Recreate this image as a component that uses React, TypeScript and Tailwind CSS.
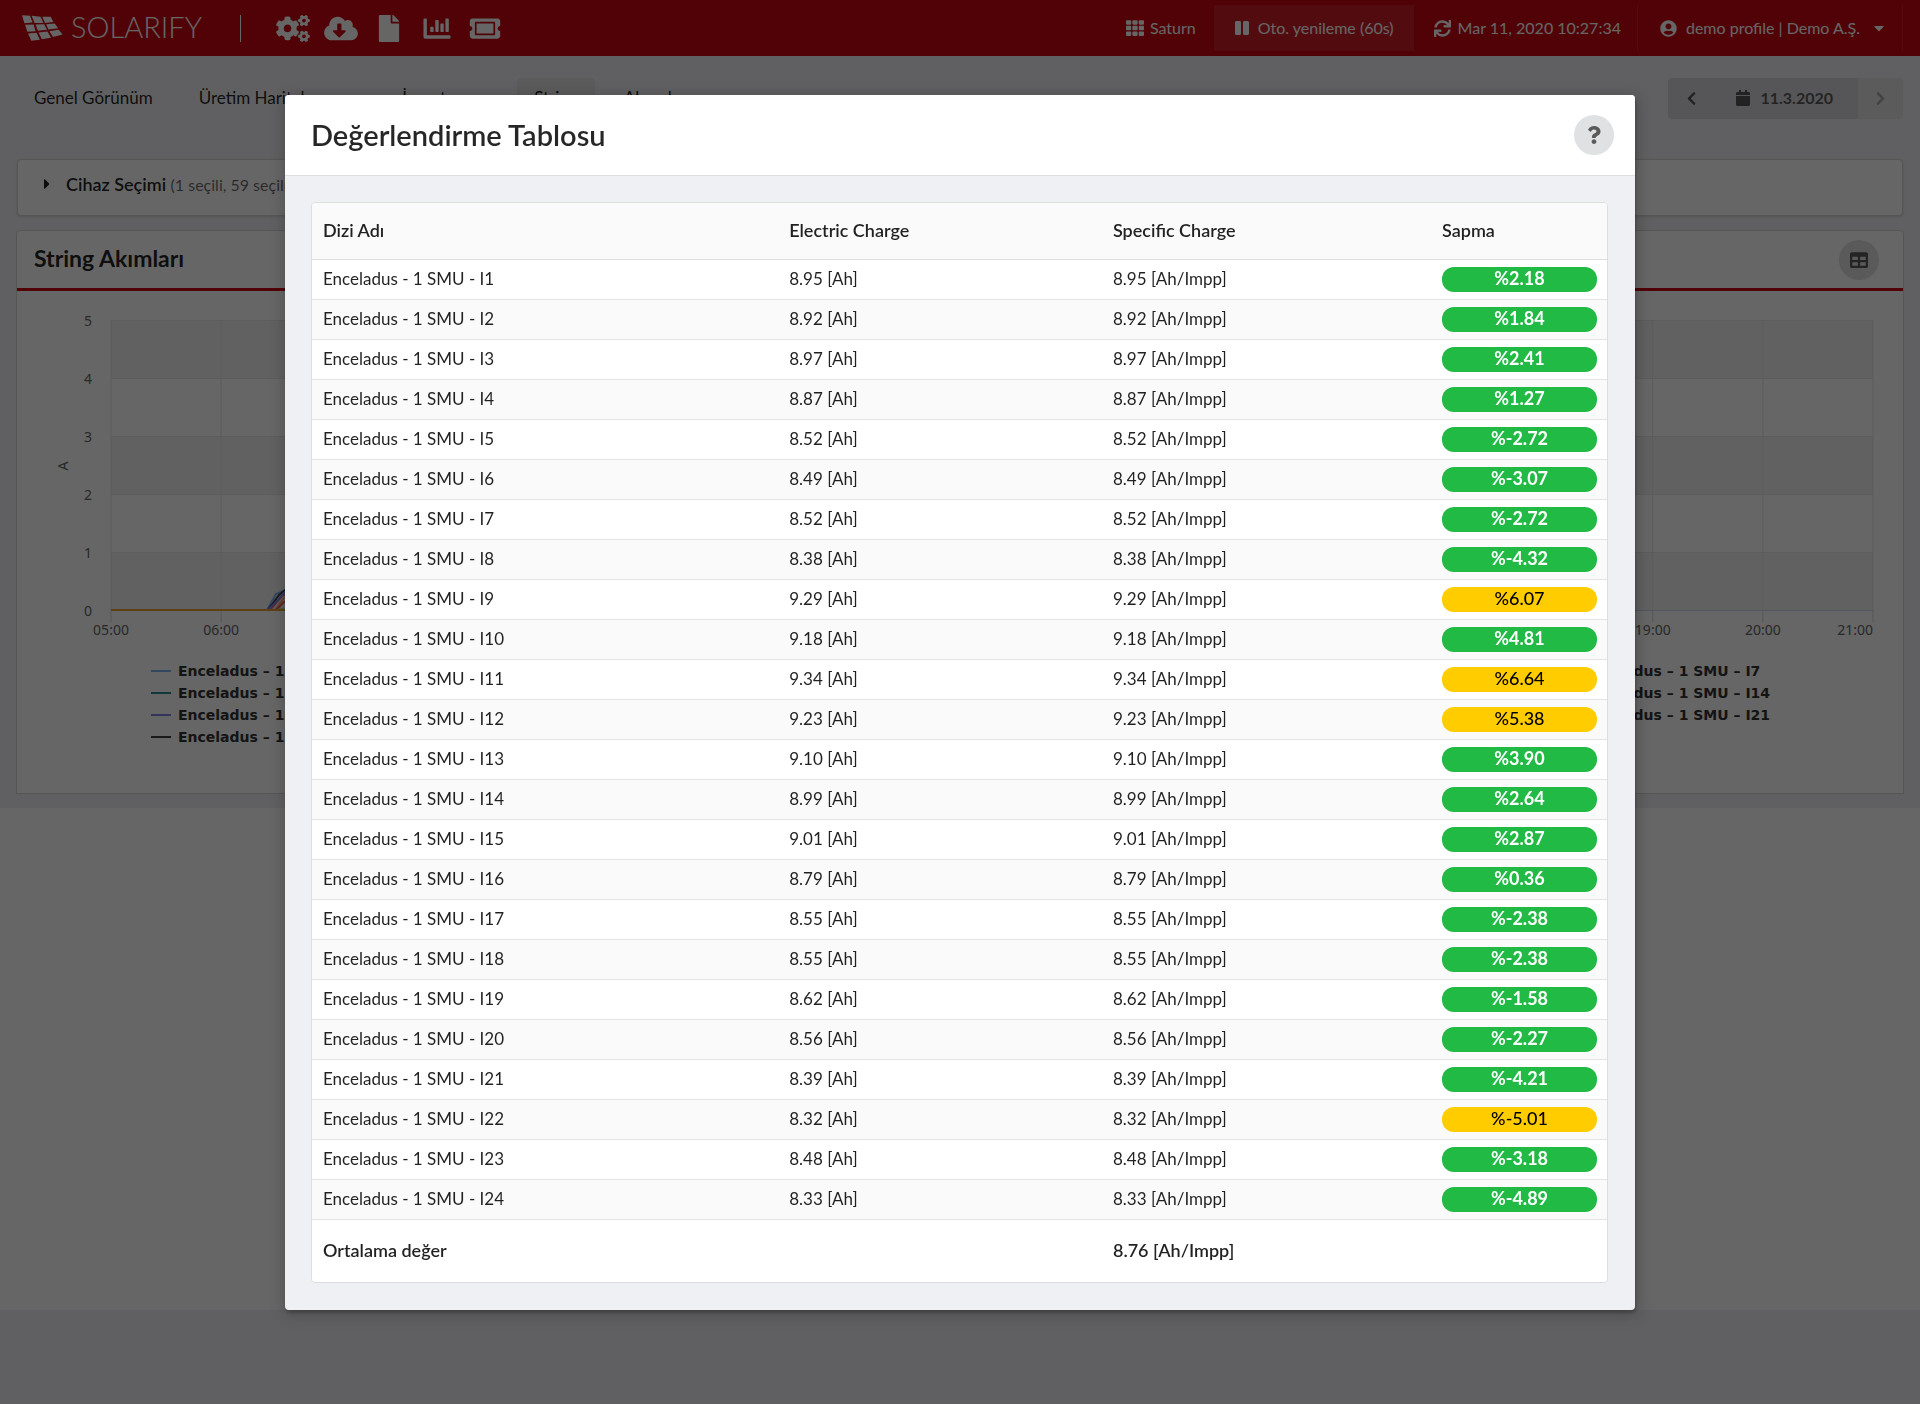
import {
  FaCalendar,
  FaCaretDown,
  FaCaretRight,
  FaChartBar,
  FaChevronLeft,
  FaChevronRight,
  FaCloudDownloadAlt,
  FaCogs,
  FaFile,
  FaPause,
  FaQuestion,
  FaSync,
  FaTable,
  FaTh,
  FaTicketAlt,
  FaUserCircle,
} from "react-icons/fa"

// charge [Ah], deviation [%]
const strings: [string, string][] = [
  ["8.95", "2.18"],
  ["8.92", "1.84"],
  ["8.97", "2.41"],
  ["8.87", "1.27"],
  ["8.52", "-2.72"],
  ["8.49", "-3.07"],
  ["8.52", "-2.72"],
  ["8.38", "-4.32"],
  ["9.29", "6.07"],
  ["9.18", "4.81"],
  ["9.34", "6.64"],
  ["9.23", "5.38"],
  ["9.10", "3.90"],
  ["8.99", "2.64"],
  ["9.01", "2.87"],
  ["8.79", "0.36"],
  ["8.55", "-2.38"],
  ["8.55", "-2.38"],
  ["8.62", "-1.58"],
  ["8.56", "-2.27"],
  ["8.39", "-4.21"],
  ["8.32", "-5.01"],
  ["8.48", "-3.18"],
  ["8.33", "-4.89"],
]

const tabs = ["Genel Görünüm", "Üretim Haritalanması", "İnverter ara", "String", "Alarmlar"]

const legendColors = ["#7cb5ec", "#434348", "#90ed7d", "#f7a35c", "#8085e9", "#f15c80", "#e4d354", "#2b908f"]
const rowColors = ["#7cb5ec", "#2b908f", "#8085e9", "#434348"]

const Logo = () => (
  <a href="#" className="flex items-center gap-2" aria-label="Solarify">
    <svg viewBox="36 39 124 79" className="h-[26px] w-[41px] fill-white">
      <polygon points="36,40 60,41 68,62 43,64" />
      <polygon points="65,41 92,44 101,63 74,63" />
      <polygon points="97,44 123,44 131,60 106,63" />
      <polygon points="45,69 71,68 77,88 52,90" />
      <polygon points="77,68 103,67 112,84 84,87" />
      <polygon points="109,67 135,65 146,79 116,83" />
      <polygon points="54,95 80,93 90,114 64,117" />
      <polygon points="86,92 113,89 124,108 96,113" />
      <polygon points="119,88 147,84 159,98 130,106" />
    </svg>
    <span className="pb-1 text-[29px] leading-none font-light text-white">SOLARIFY</span>
  </a>
)

const Header = () => (
  <header className="flex h-14 items-center bg-[#c80712] pr-[17px] pl-[22px] text-base text-white">
    <div className="w-[218px]">
      <Logo />
    </div>
    <nav className="flex items-center gap-[14px] border-l border-white pl-[35px]">
      <a href="#" aria-label="Ayarlar"><FaCogs className="h-[27px] w-[34px]" /></a>
      <a href="#" aria-label="İndir"><FaCloudDownloadAlt className="h-[27px] w-[34px]" /></a>
      <a href="#" aria-label="Raporlar"><FaFile className="h-[27px] w-[34px]" /></a>
      <a href="#" aria-label="Grafikler"><FaChartBar className="h-[27px] w-[34px]" /></a>
      <a href="#" aria-label="Biletler"><FaTicketAlt className="h-[27px] w-[34px]" /></a>
    </nav>
    <div className="ml-auto flex h-[46px] items-stretch">
      <a href="#" className="flex items-center gap-[6px] px-[18px]">
        <FaTh className="size-[18px]" />
        Saturn
      </a>
      <button className="flex items-center gap-2 bg-white/10 px-5">
        <FaPause className="size-4" />
        Oto. yenileme (60s)
      </button>
      <button className="flex items-center gap-[7px] pr-4 pl-5">
        <FaSync className="size-[17px]" />
        Mar 11, 2020 10:27:34
      </button>
      <button className="flex items-center border-x border-white/10 pr-[15px] pl-[22px]">
        <FaUserCircle className="mr-[9px] size-[17px]" />
        demo profile | Demo A.Ş.
        <FaCaretDown className="ml-[11px] size-4" />
      </button>
    </div>
  </header>
)

const yTicks = [5, 4, 3, 2, 1, 0]
const hours = Array.from({ length: 17 }, (_, i) => i + 5)

const StringChart = () => {
  const left = 94
  const right = 1856
  const top = 29
  const rowH = 58
  const bottom = top + rowH * 5
  const step = (right - left) / 16

  return (
    <svg viewBox="0 0 1886 502" className="block w-full" fontFamily="'Noto Sans', sans-serif" fontSize="14">
      {[0, 2, 4].map((i) => (
        <rect key={i} x={left} y={top + i * rowH} width={right - left} height={rowH} fill="#f2f2f2" />
      ))}
      {yTicks.map((t, i) => (
        <g key={t}>
          <line x1={left} x2={right} y1={top + i * rowH + 0.5} y2={top + i * rowH + 0.5} stroke="#e6e6e6" />
          <text x={left - 19} y={top + i * rowH + 6} textAnchor="end" fill="#666">{t}</text>
        </g>
      ))}
      {hours.map((h, i) => (
        <g key={h}>
          <line x1={left + i * step} x2={left + i * step} y1={top} y2={bottom} stroke="#e6e6e6" />
          <line x1={left + i * step} x2={left + i * step} y1={bottom} y2={bottom + 12} stroke="#ccd6eb" />
          <text
            x={left + i * step}
            y={bottom + 25}
            textAnchor={i === 16 ? "end" : "middle"}
            fill="#666"
          >
            {String(h).padStart(2, "0")}:00
          </text>
        </g>
      ))}
      <line x1={left} x2={right} y1={bottom + 0.5} y2={bottom + 0.5} stroke="#ccd6eb" />
      <text x="51" y="175" textAnchor="middle" fill="#666" transform="rotate(-90 51 175)">A</text>

      <g fill="none" strokeWidth="2">
        <polyline points="250,319 259,303 271,298 291,271" stroke="#7cb5ec" />
        <polyline points="251,319 262,304 273,295 291,275" stroke="#434348" />
        <polyline points="253,319 265,305 277,299 291,281" stroke="#f15c80" />
        <polyline points="251,319 259,311 269,300 291,273" stroke="#8085e9" />
        <polyline points="258,319 267,307 277,303 291,287" stroke="#f7a35c" />
        <polyline points="259,319 267,311 277,306 291,291" stroke="#f45b5b" />
        <polyline points="261,319 271,317 291,301" stroke="#90ed7d" />
        <polyline points={`${left},319 1500,319`} stroke="#e8a030" />
      </g>

      {strings.map((_, i) => {
        const row = Math.floor(i / 7)
        const col = i % 7
        const x = 134 + col * 234
        const y = 380 + row * 22
        return (
          <g key={i}>
            <line
              x1={x}
              x2={x + 20}
              y1={y}
              y2={y}
              strokeWidth="2"
              stroke={col === 0 ? rowColors[row] : legendColors[i % 8]}
            />
            <text x={x + 27} y={y + 5} fontFamily="'DejaVu Sans', sans-serif" fontWeight="bold" fill="#333">
              {`Enceladus – 1 SMU – I${i + 1}`}
            </text>
          </g>
        )
      })}
    </svg>
  )
}

const Page = () => (
  <div className="col-start-1 row-start-1">
    <Header />
    <main className="bg-[#f0f0f4] px-4 pt-[22px] pb-[14px]">
      <div className="mx-px flex h-[41px] items-stretch justify-between">
        <nav className="flex gap-3">
          {tabs.map((t) => (
            <a
              key={t}
              href="#"
              className={
                t === "String"
                  ? "flex items-center rounded bg-black/5 px-[17px] pb-px text-[17px] text-black/95"
                  : "flex items-center px-[17px] pb-px text-[17px] text-black/87"
              }
            >
              {t}
            </a>
          ))}
        </nav>
        <div className="flex overflow-hidden rounded bg-black/5 text-base font-bold text-black/60">
          <button aria-label="Önceki gün" className="w-12 bg-black/5 pl-4"><FaChevronLeft className="size-[15px]" /></button>
          <button className="flex items-center gap-[9px] bg-black/5 px-[19px] pr-[25px] pb-px">
            <FaCalendar className="h-4 w-4" />
            11.3.2020
          </button>
          <button aria-label="Sonraki gün" className="w-[45px] pl-[15px] opacity-45" disabled><FaChevronRight className="size-[15px]" /></button>
        </div>
      </div>

      <section className="mx-px mt-10 flex h-[57px] items-center rounded border border-[#d4d4d5] bg-white pb-2 pl-[21px] shadow-sm">
        <FaCaretRight className="mr-[11px] size-4 text-black/87" />
        <h3 className="text-lg font-semibold text-black/87">
          Cihaz Seçimi <small className="text-base font-normal text-black/60">(1 seçili, 59 seçilmedi)</small>
        </h3>
      </section>

      <section className="mt-[14px] rounded-t border border-[#d4d4d5] bg-white">
        <div className="flex h-[60px] items-center justify-between border-b-[3px] border-[#c80712] pr-6 pl-[17px]">
          <h2 className="pb-[2px] text-[23px] font-bold text-black/87">String Akımları</h2>
          <button
            aria-label="Değerlendirme tablosunu aç"
            className="flex size-10 items-center justify-center rounded-full bg-[#e0e1e2] text-black/60"
          >
            <FaTable className="size-[18px]" />
          </button>
        </div>
        <StringChart />
      </section>
    </main>
  </div>
)

const th = "h-[57px] border-b border-[#dededf] bg-[#fafafa] px-[11px] pb-[2px] text-left text-lg font-semibold"
const td = "h-10 border-b border-[#e4e4e4] px-[11px] pb-[2px]"

const EvaluationTable = () => (
  <div className="overflow-hidden rounded border border-[#dededf] bg-white">
    <table className="w-full table-fixed border-separate border-spacing-0 text-[17px] leading-6 text-black/87">
      <thead>
        <tr>
          <th className={`${th} w-[36%]`}>Dizi Adı</th>
          <th className={`${th} w-[25%]`}>Electric Charge</th>
          <th className={th}>Specific Charge</th>
          <th className={`${th} w-[176px]`}>Sapma</th>
        </tr>
      </thead>
      <tbody>
        {strings.map(([charge, dev], i) => (
          <tr key={i} className="even:bg-[#fafafa]">
            <td className={td}>Enceladus - 1 SMU - I{i + 1}</td>
            <td className={td}>{charge} [Ah]</td>
            <td className={td}>{charge} [Ah/Impp]</td>
            <td className="h-10 border-b border-[#e4e4e4] px-[10px] pl-[11px]">
              <div
                className={
                  Math.abs(Number(dev)) > 5
                    ? "h-[25px] rounded-xl bg-[#ffcc00] text-center text-lg leading-[22px] font-medium text-black"
                    : "h-[25px] rounded-xl bg-[#21ba45] text-center text-lg leading-[22px] font-bold text-white"
                }
              >
                %{dev}
              </div>
            </td>
          </tr>
        ))}
      </tbody>
      <tfoot>
        <tr className="text-lg font-semibold">
          <td className="h-[62px] px-[11px] pb-[3px]">Ortalama değer</td>
          <td />
          <td className="px-[11px] pb-[3px]">8.76 [Ah/Impp]</td>
          <td />
        </tr>
      </tfoot>
    </table>
  </div>
)

const Modal = () => (
  <div className="z-20 col-start-1 row-start-1 flex items-start justify-center pt-[95px]">
    <div
      role="dialog"
      aria-labelledby="modal-title"
      className="w-full max-w-[1350px] overflow-hidden rounded bg-[#eff0f4] shadow-[1px_3px_3px_0_rgba(0,0,0,0.2),1px_3px_15px_2px_rgba(0,0,0,0.2)]"
    >
      <div className="flex h-[81px] items-center justify-between border-b border-[#dededf] bg-white pr-[21px] pl-[26px]">
        <h1 id="modal-title" className="text-[29px] font-semibold text-black/85">Değerlendirme Tablosu</h1>
        <button
          aria-label="Yardım"
          className="flex size-10 items-center justify-center rounded-full bg-[#e0e1e2] text-black/60"
        >
          <FaQuestion className="size-[18px]" />
        </button>
      </div>
      <div className="pt-[26px] pr-[27px] pb-[27px] pl-[26px]">
        <EvaluationTable />
      </div>
    </div>
  </div>
)

const App = () => {
  return (
    <div className="min-h-screen bg-[#f0f0f4] font-['Lato',sans-serif]">
      <div className="grid grid-cols-1 bg-white">
        <Page />
        <div className="fixed inset-0 z-10 bg-black/60" />
        <Modal />
      </div>
    </div>
  )
}

export default App
